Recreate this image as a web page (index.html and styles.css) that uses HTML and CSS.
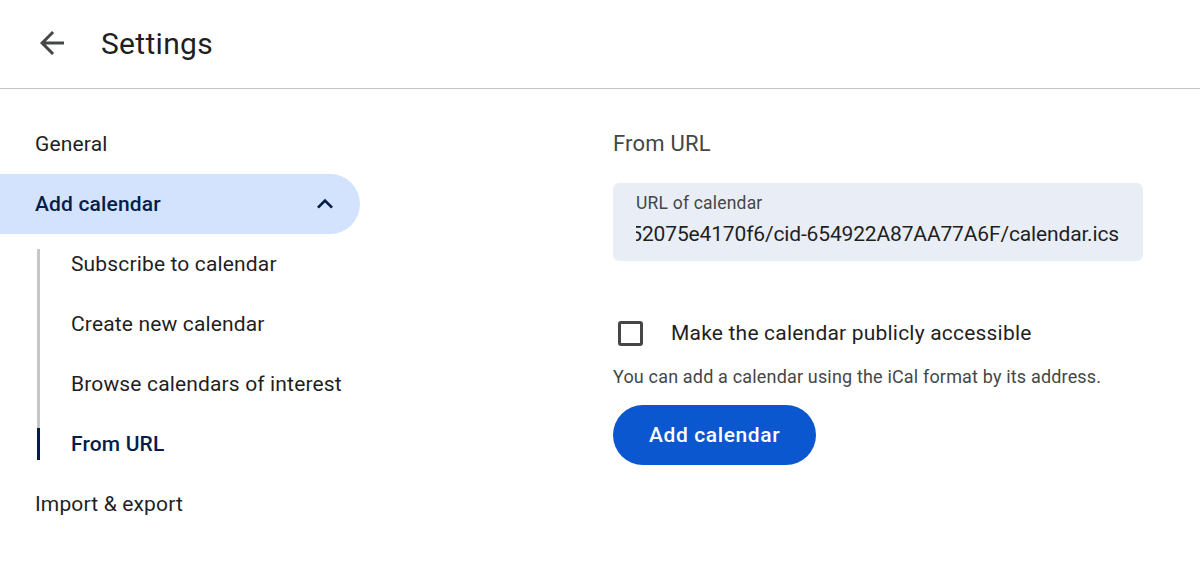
FILE: index.html
```html
<!DOCTYPE html>
<html lang="en">
<head>
    <meta charset="UTF-8">
    <meta name="viewport" content="width=device-width, initial-scale=1.0">
    <title>Settings - From URL</title>
    <link rel="stylesheet" href="styles.css">
</head>
<body>
    <header class="topbar">
        <button class="back-btn" aria-label="Back">
            <svg viewBox="0 0 24 24" width="36" height="36"><path d="M20 11H7.83l5.59-5.59L12 4l-8 8 8 8 1.41-1.41L7.83 13H20v-2z" fill="#444746"/></svg>
        </button>
        <h1 class="title">Settings</h1>
    </header>

    <main class="layout">
        <nav class="side-nav">
            <a class="nav-item">General</a>
            <a class="nav-item nav-item-open">
                <span>Add calendar</span>
                <svg class="chevron" viewBox="0 0 24 24" width="32" height="32"><path d="M12 8l-6 6 1.41 1.41L12 10.83l4.59 4.58L18 14z" fill="#041e49"/></svg>
            </a>
            <div class="sub-list">
                <a class="sub-item">Subscribe to calendar</a>
                <a class="sub-item">Create new calendar</a>
                <a class="sub-item">Browse calendars of interest</a>
                <a class="sub-item sub-item-active">From URL</a>
            </div>
            <a class="nav-item">Import &amp; export</a>
        </nav>

        <section class="content">
            <h2 class="section-title">From URL</h2>

            <div class="url-field">
                <div class="url-label">URL of calendar</div>
                <div class="url-value"><span>52075e4170f6/cid-654922A87AA77A6F/calendar.ics</span></div>
            </div>

            <label class="check-row">
                <span class="check-box"></span>
                <span>Make the calendar publicly accessible</span>
            </label>

            <p class="help-text">You can add a calendar using the iCal format by its address.</p>

            <button class="primary-btn">Add calendar</button>
        </section>
    </main>
</body>
</html>
```

FILE: styles.css
```css
* {
    margin: 0;
    padding: 0;
    box-sizing: border-box;
    font-family: Roboto, "Liberation Sans", sans-serif;
}
body {
    background: white;
    color: #1f1f1f;
}
.topbar {
    height: 89px;
    display: flex;
    align-items: center;
    padding-left: 34px;
    padding-bottom: 2px;
    border-bottom: 1px solid #c4c4c4;
}
.back-btn {
    background: none;
    border: none;
    width: 36px;
    height: 36px;
    display: flex;
}
.title {
    margin-left: 31px;
    font-size: 30px;
    font-weight: 400;
    letter-spacing: 0.3px;
    color: #1f1f1f;
}
.layout {
    display: flex;
}
.side-nav {
    width: 360px;
    padding-top: 25px;
    display: flex;
    flex-direction: column;
}
.nav-item {
    height: 60px;
    display: flex;
    align-items: center;
    justify-content: space-between;
    padding: 0 19px 0 35px;
    font-size: 21px;
    letter-spacing: 0.15px;
    color: #1f1f1f;
}
.nav-item-open {
    background: #d3e3fd;
    border-radius: 0 30px 30px 0;
    color: #041e49;
    font-weight: 500;
}
.sub-list {
    position: relative;
}
.sub-list::before {
    content: "";
    position: absolute;
    left: 37px;
    top: 15px;
    bottom: 14px;
    width: 3px;
    background: #c7c7c7;
}
.sub-item {
    position: relative;
    height: 60px;
    display: flex;
    align-items: center;
    padding-left: 71px;
    font-size: 21px;
    letter-spacing: 0.15px;
    color: #1f1f1f;
}
.sub-item-active {
    color: #041e49;
    font-weight: 500;
}
.sub-item-active::before {
    content: "";
    position: absolute;
    left: 37px;
    top: 14px;
    bottom: 14px;
    width: 3px;
    background: #041e49;
}
.content {
    margin-left: 253px;
    padding-top: 40px;
    width: 530px;
}
.section-title {
    font-size: 22px;
    font-weight: 400;
    line-height: 30px;
    letter-spacing: 0.2px;
    color: #444746;
    margin-bottom: 24px;
}
.url-field {
    height: 78px;
    background: #e9eef6;
    border-radius: 6px;
    padding: 9px 24px 0 23px;
}
.url-label {
    font-size: 17.5px;
    line-height: 22px;
    letter-spacing: 0.2px;
    color: #444746;
}
.url-value {
    margin-top: 6px;
    font-size: 21px;
    line-height: 28px;
    letter-spacing: -0.15px;
    color: #1f1f1f;
    display: flex;
    justify-content: flex-end;
    overflow: hidden;
    white-space: nowrap;
}
.check-row {
    margin-top: 52px;
    height: 40px;
    display: flex;
    align-items: center;
    font-size: 21px;
    letter-spacing: 0.2px;
    color: #1f1f1f;
}
.check-box {
    width: 25px;
    height: 25px;
    margin-left: 5px;
    margin-right: 28px;
    border: 3px solid #444746;
    border-radius: 3px;
}
.help-text {
    margin-top: 13px;
    font-size: 18px;
    line-height: 22px;
    letter-spacing: 0.17px;
    color: #444746;
}
.primary-btn {
    margin-top: 17px;
    height: 60px;
    padding: 0 36px;
    border: none;
    border-radius: 30px;
    background: #0b57d0;
    color: white;
    font-size: 21px;
    font-weight: 500;
    letter-spacing: 0.6px;
}
```
